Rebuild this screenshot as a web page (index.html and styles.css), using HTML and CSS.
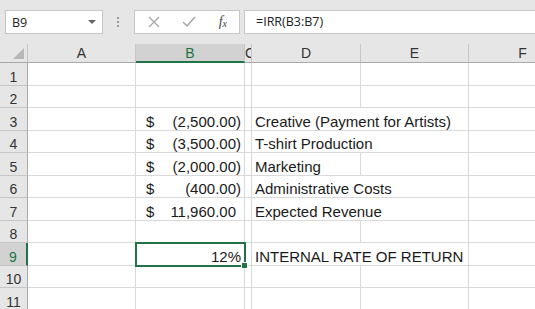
FILE: index.html
```html
<!DOCTYPE html>
<html lang="en">
<head>
  <meta charset="UTF-8">
  <title>IRR</title>
  <link rel="stylesheet" href="styles.css">
</head>
<body>
  <div class="toolbar">
    <div class="name-box">
      <span>B9</span>
      <span class="arrow"></span>
    </div>
    <div class="grip"><i></i><i></i><i></i></div>
    <div class="fx-buttons">
      <svg width="12" height="12" viewBox="0 0 12 12"><path d="M1 1 L11 11 M11 1 L1 11" stroke="#a6a6a6" stroke-width="1.3" fill="none"/></svg>
      <svg width="14" height="12" viewBox="0 0 14 12"><path d="M1 6 L5 10 L13 1" stroke="#a6a6a6" stroke-width="1.5" fill="none"/></svg>
      <span class="fx">f<sub>x</sub></span>
    </div>
    <div class="formula">=IRR(B3:B7)</div>
  </div>

  <div class="sheet">
    <div class="hd corner"><span class="tri"></span></div>
    <div class="hd">A</div>
    <div class="hd sel">B</div>
    <div class="hd c-col">C</div>
    <div class="hd">D</div>
    <div class="hd">E</div>
    <div class="hd">F</div>

    <div class="rh">1</div><div class="cell"></div><div class="cell"></div><div class="cell"></div><div class="cell"></div><div class="cell"></div><div class="cell"></div>
    <div class="rh">2</div><div class="cell"></div><div class="cell"></div><div class="cell"></div><div class="cell"></div><div class="cell"></div><div class="cell"></div>

    <div class="rh">3</div><div class="cell"></div>
    <div class="cell money"><span>$</span><span>(2,500.00)</span></div>
    <div class="cell"></div><div class="cell text wide">Creative (Payment for Artists)</div><div class="cell"></div>

    <div class="rh">4</div><div class="cell"></div>
    <div class="cell money"><span>$</span><span>(3,500.00)</span></div>
    <div class="cell"></div><div class="cell text wide">T-shirt Production</div><div class="cell"></div>

    <div class="rh">5</div><div class="cell"></div>
    <div class="cell money"><span>$</span><span>(2,000.00)</span></div>
    <div class="cell"></div><div class="cell text">Marketing</div><div class="cell"></div><div class="cell"></div>

    <div class="rh">6</div><div class="cell"></div>
    <div class="cell money"><span>$</span><span>(400.00)</span></div>
    <div class="cell"></div><div class="cell text wide">Administrative Costs</div><div class="cell"></div>

    <div class="rh">7</div><div class="cell"></div>
    <div class="cell money"><span>$</span><span>11,960.00<i class="pad">)</i></span></div>
    <div class="cell"></div><div class="cell text wide">Expected Revenue</div><div class="cell"></div>

    <div class="rh">8</div><div class="cell"></div><div class="cell"></div><div class="cell"></div><div class="cell"></div><div class="cell"></div><div class="cell"></div>

    <div class="rh row-sel">9</div><div class="cell"></div>
    <div class="cell active">12%</div>
    <div class="cell"></div><div class="cell text wide">INTERNAL RATE OF RETURN</div><div class="cell"></div>

    <div class="rh">10</div><div class="cell"></div><div class="cell"></div><div class="cell"></div><div class="cell"></div><div class="cell"></div><div class="cell"></div>
    <div class="rh">11</div><div class="cell"></div><div class="cell"></div><div class="cell"></div><div class="cell"></div><div class="cell"></div><div class="cell"></div>
  </div>
</body>
</html>
```

FILE: styles.css
```css
body {
  margin: 0;
  background: #fff;
  font-family: "Liberation Sans", Arial, sans-serif;
  overflow: hidden;
}
.toolbar {
  display: flex;
  align-items: flex-start;
  height: 44px;
  padding-top: 10px;
  box-sizing: border-box;
  background: #e6e6e6;
}
.name-box {
  display: flex;
  align-items: center;
  justify-content: space-between;
  width: 98px;
  height: 24px;
  margin-left: 5px;
  padding: 0 6px 0 6px;
  box-sizing: border-box;
  background: #fff;
  border: 1px solid #c6c6c6;
  font-family: "Open Sans", "Noto Sans", sans-serif;
  font-size: 12.5px;
  color: #222;
}
.arrow {
  width: 0;
  height: 0;
  border-left: 4px solid transparent;
  border-right: 4px solid transparent;
  border-top: 4px solid #666;
}
.grip {
  display: flex;
  flex-direction: column;
  gap: 2px;
  width: 3px;
  margin: 7px 14px 0 14px;
}
.grip i {
  width: 2px;
  height: 2px;
  background: #9a9a9a;
}
.fx-buttons {
  display: flex;
  align-items: center;
  justify-content: space-between;
  width: 106px;
  height: 24px;
  padding: 0 12px 0 13px;
  box-sizing: border-box;
  background: #fff;
  border: 1px solid #c6c6c6;
}
.fx {
  font-family: "Liberation Serif", serif;
  font-style: italic;
  font-size: 14px;
  color: #444;
}
.fx sub {
  font-size: 10px;
  vertical-align: -1px;
}
.formula {
  flex: 1;
  height: 24px;
  margin-left: 4px;
  padding-left: 11px;
  box-sizing: border-box;
  background: #fff;
  border: 1px solid #c6c6c6;
  border-right: none;
  font-family: "Open Sans", "Noto Sans", sans-serif;
  font-size: 12.5px;
  line-height: 22px;
  color: #222;
}
.sheet {
  display: grid;
  grid-template-columns: 28px 108px 109px 7px 109px 108px 108px;
  grid-template-rows: 19px 23px 22px 23px 22px 23px 22px 23px 22px 23px 22px 23px;
  background: #fff;
  overflow: hidden;
}
.sheet > div {
  box-sizing: border-box;
  border-right: 1px solid #d9d9d9;
  border-bottom: 1px solid #d9d9d9;
  white-space: nowrap;
  overflow: visible;
}
.sheet > .hd {
  display: flex;
  align-items: center;
  justify-content: center;
  background: #e6e6e6;
  border-right-color: #c6c6c6;
  border-bottom-color: #a9a9a9;
  font-size: 14px;
  color: #333;
}
.sheet > .hd.sel {
  background: #d2d2d2;
  border-bottom: 2px solid #217346;
  color: #217346;
}
.sheet > .c-col {
  justify-content: flex-start;
  overflow: hidden;
}
.corner {
  position: relative;
}
.tri {
  position: absolute;
  right: 3px;
  bottom: 3px;
  width: 0;
  height: 0;
  border-left: 11px solid transparent;
  border-bottom: 11px solid #b7b7b7;
}
.sheet > .rh {
  display: flex;
  align-items: flex-end;
  justify-content: center;
  background: #e6e6e6;
  border-right-color: #a9a9a9;
  border-bottom-color: #c6c6c6;
  font-size: 14px;
  color: #333;
}
.sheet > .rh.row-sel {
  background: #d2d2d2;
  border-right: 2px solid #217346;
  color: #217346;
}
.cell {
  display: flex;
  align-items: flex-end;
  padding: 0 3px 0 3px;
  font-size: 15px;
  color: #1a1a1a;
}
.wide {
  grid-column: span 2;
}
.money {
  justify-content: space-between;
  padding-left: 10px;
}
.pad {
  visibility: hidden;
  font-style: normal;
}
.active {
  position: relative;
  justify-content: flex-end;
  outline: 2px solid #217346;
  outline-offset: -1px;
}
.active::after {
  content: "";
  position: absolute;
  right: -4px;
  bottom: -4px;
  width: 5px;
  height: 5px;
  background: #217346;
  border: 1px solid #fff;
}
```
